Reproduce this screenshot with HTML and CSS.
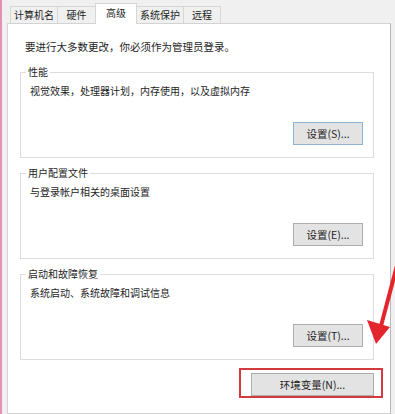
FILE: index.html
```html
<!DOCTYPE html>
<html>
  <head>
    <meta charset="utf-8">
    <title>系统属性</title>
    <link rel="stylesheet" href="styles.css">
  </head>
  <body>
    <div class="dialog">
      <!-- Tabs -->
      <div class="tabs">
        <div class="tab">计算机名</div>
        <div class="tab">硬件</div>
        <div class="tab active">高级</div>
        <div class="tab">系统保护</div>
        <div class="tab">远程</div>
      </div>

      <!-- Advanced page -->
      <div class="panel">
        <div class="intro">要进行大多数更改，你必须作为管理员登录。</div>

        <fieldset class="group">
          <legend>性能</legend>
          <div class="desc">视觉效果，处理器计划，内存使用，以及虚拟内存</div>
          <button class="btn btn-set focus">设置(S)...</button>
        </fieldset>

        <fieldset class="group">
          <legend>用户配置文件</legend>
          <div class="desc">与登录帐户相关的桌面设置</div>
          <button class="btn btn-set">设置(E)...</button>
        </fieldset>

        <fieldset class="group">
          <legend>启动和故障恢复</legend>
          <div class="desc">系统启动、系统故障和调试信息</div>
          <button class="btn btn-set">设置(T)...</button>
        </fieldset>

        <div class="highlight">
          <button class="btn btn-env">环境变量(N)...</button>
        </div>
      </div>
    </div>

    <!-- annotation arrow -->
    <svg class="arrow" width="395" height="414" viewBox="0 0 395 414">
      <line x1="399" y1="258" x2="381" y2="326" stroke="#e2262c" stroke-width="4" />
      <polygon points="376,344 367,320 390,327" fill="#e2262c" />
    </svg>
  </body>
</html>
```

FILE: styles.css
```css
body {
  margin: 0px;
  height: 414px;
  overflow: hidden;
  position: relative;
  background-color: #f0f0f0;
  border-left: 2px solid #e590b2;
  font-family: "Noto Sans CJK SC", sans-serif;
  font-size: 10px;
  color: #1e1e1e;
}

.dialog {
  display: flex;
  flex-direction: column;
  height: 100%;
  padding: 3px 4px 0px 5px;
  box-sizing: border-box;
}

/* tabs */
.tabs {
  display: flex;
  align-items: flex-end;
  height: 21px;
  margin-left: 3px;
  margin-bottom: -1px;
  position: relative;
  z-index: 1;
}

.tab {
  height: 17px;
  line-height: 16px;
  min-width: 38px;
  padding: 0px 3px;
  margin-bottom: 1px;
  box-sizing: border-box;
  text-align: center;
  border: 1px solid #d6d6d6;
  border-bottom: none;
  border-right: none;
  background-color: #f0f0f0;
}

.tab:last-child { border-right: 1px solid #d6d6d6; }

.tab.active {
  height: 21px;
  min-width: 42px;
  margin-bottom: 0px;
  line-height: 18px;
  background-color: #fff;
  border-right: 1px solid #d6d6d6;
}

.tab.active + .tab { border-left: none; }

/* page */
.panel {
  flex: 1;
  display: flex;
  flex-direction: column;
  background-color: #fff;
  border: 1px solid #d3d3d3;
  border-right-color: #b9b9b9;
  padding: 15px 16px 0px 12px;
}

.intro {
  line-height: 16px;
  padding-left: 5px;
  font-size: 10.5px;
}

.group {
  margin: 7px 0px 0px 0px;
  padding: 3px 10px 12px 9px;
  border: 1px solid #dcdcdc;
}

.group:first-of-type { margin-top: 9px; }

.group legend {
  line-height: 16px;
  padding: 0px 2px;
  margin-left: -4px;
}

.desc {
  line-height: 16px;
}

.btn {
  display: block;
  height: 23px;
  padding: 0px;
  border: 1px solid #adadad;
  background-color: #e3e3e3;
  font-family: "Noto Sans CJK SC", sans-serif;
  font-size: 10.5px;
  color: #1e1e1e;
}

.btn-set {
  width: 70px;
  margin: 23px 0px 0px auto;
}

.btn.focus { border-color: #8fb3d4; }

.highlight {
  align-self: flex-end;
  margin: 8px -9px 0px 0px;
  padding: 3px 7px 0px 10px;
  border: 2px solid #d4393d;
}

.btn-env { width: 123px; }

.arrow {
  position: absolute;
  top: 0px;
  left: -2px;
}
```
